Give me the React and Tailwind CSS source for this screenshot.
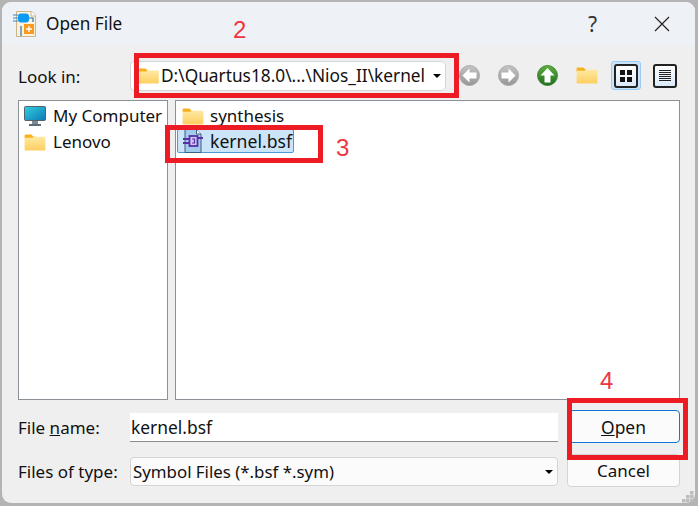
const FONT = "font-['Noto_Sans','Open_Sans',sans-serif]";

const Folder = ({ className }) => (
  <svg viewBox="0 0 22 18" className={className}>
    <defs>
      <linearGradient id="folderFill" x1="0" y1="0" x2="0" y2="1">
        <stop offset="0" stopColor="#ffe9a3" />
        <stop offset="1" stopColor="#fdcf60" />
      </linearGradient>
    </defs>
    <path d="M0 1.5 Q0 0.5 1 0.5 H7 L9.5 3 H11 V5 H0 Z" fill="#f6b01c" />
    <path d="M0 4 H8 L10 2.8 H21 Q22 2.8 22 3.8 V16.5 Q22 17.5 21 17.5 H1 Q0 17.5 0 16.5 Z" fill="url(#folderFill)" />
  </svg>
);

const AppIcon = () => (
  <svg viewBox="0 0 24 28" className="w-[24px] h-[28px]">
    <path d="M3.5 1.5 H19 L22.5 5 V26.5 H3.5 Z" fill="#fbf2dc" stroke="#c9b48c" strokeWidth="1" />
    <path d="M18 1 V6 H23" fill="#fff" stroke="#c9b48c" strokeWidth="1" />
    <path d="M0 5 H5 M0 8 H5 M0 11 H5" stroke="#3a86d8" strokeWidth="1.2" />
    <path d="M16 8 H20 V12 M8 16 V26" stroke="#2f6fb5" strokeWidth="1.2" fill="none" />
    <rect x="5" y="3.5" width="11" height="9" rx="3" fill="#0c9bf2" />
    <rect x="11" y="14" width="10" height="10" fill="#f79a1e" />
    <path d="M16 16 V22 M13 19 H19" stroke="#fff" strokeWidth="1.4" />
  </svg>
);

const Monitor = () => (
  <svg viewBox="0 0 22 20" className="w-[22px] h-[20px]">
    <defs>
      <linearGradient id="screenFill" x1="0" y1="0" x2="1" y2="1">
        <stop offset="0" stopColor="#30d0dc" />
        <stop offset="1" stopColor="#0f78b8" />
      </linearGradient>
    </defs>
    <rect x="0.5" y="0.5" width="21" height="14" rx="1" fill="url(#screenFill)" stroke="#56636e" />
    <rect x="8" y="15" width="6" height="3" fill="#7c8a94" />
    <rect x="5" y="18" width="12" height="2" fill="#5f6b74" />
  </svg>
);

const BsfIcon = () => (
  <svg viewBox="0 0 20 24" className="w-[20px] h-[24px]">
    <path d="M2 0.5 H13.5 L18 5 V23.5 H2 Z" fill="#a3cbed" stroke="#3f5f7e" strokeWidth="1" />
    <path d="M13.5 0.5 V5 H18" fill="#fff" stroke="#3f5f7e" strokeWidth="1" />
    <rect x="6.5" y="7" width="8" height="10" fill="#cfc8ee" stroke="#5a2ea6" strokeWidth="1.8" />
    <path d="M0 10 H6 M0 14 H6 M14.5 9 H20" stroke="#5a2ea6" strokeWidth="1.8" />
    <path d="M9 10 H11.5 V14 H9" fill="none" stroke="#5a2ea6" strokeWidth="1.2" />
  </svg>
);

const RoundArrow = ({ dir, from, to, ring }) => {
  const arrows = {
    left: "M10.5 3.5 L3.5 10.5 L10.5 17.5 V13.5 H17.5 V7.5 H10.5 Z",
    right: "M10.5 3.5 L17.5 10.5 L10.5 17.5 V13.5 H3.5 V7.5 H10.5 Z",
    up: "M10.5 3 L17.5 10.5 H13.5 V17.5 H7.5 V10.5 H3.5 Z",
  };
  const id = `arrow-${dir}`;
  return (
    <svg viewBox="0 0 21 21" className="w-[21px] h-[21px]">
      <defs>
        <linearGradient id={id} x1="0" y1="0" x2="0" y2="1">
          <stop offset="0" stopColor={from} />
          <stop offset="1" stopColor={to} />
        </linearGradient>
      </defs>
      <circle cx="10.5" cy="10.5" r="10" fill={`url(#${id})`} stroke={ring} strokeWidth="0.8" />
      <path d={arrows[dir]} fill="#fff" />
    </svg>
  );
};

const GridViewIcon = () => (
  <svg viewBox="0 0 12 12" className="w-[12px] h-[12px]" fill="#111">
    <rect x="0" y="0" width="5" height="5" />
    <rect x="7" y="0" width="5" height="5" />
    <rect x="0" y="7" width="5" height="5" />
    <rect x="7" y="7" width="5" height="5" />
  </svg>
);

const ListViewIcon = () => (
  <svg viewBox="0 0 12 12" className="w-[12px] h-[12px]" stroke="#222" strokeWidth="1">
    <path d="M0 0.5 H12 M0 2.5 H12 M0 4.5 H12 M0 6.5 H12 M0 8.5 H12 M0 10.5 H12" />
  </svg>
);

const Caret = () => (
  <span className="w-0 h-0 border-x-[4px] border-x-transparent border-t-[4px] border-t-black" />
);

const Callout = ({ className }) => (
  <div className={`absolute border-[5px] border-[#ed1c24] ${className}`} />
);

const CalloutNumber = ({ className, children }) => (
  <span className={`absolute text-[24px] leading-[28px] text-[#ee3540] font-['Liberation_Sans',sans-serif] ${className}`}>
    {children}
  </span>
);

const ToolCell = ({ children }) => (
  <div className="w-[39px] flex items-center justify-center">{children}</div>
);

export default function App() {
  return (
    <div className={`relative w-[698px] h-[506px] overflow-hidden bg-[#b4b4b4] pt-[2px] pl-[2px] pr-[3px] pb-[3px] text-[17px] leading-[24px] text-[#111] ${FONT}`}>
      <div className="relative h-full flex flex-col rounded-[9px] overflow-hidden bg-[#efefef]">
        {/* Title bar */}
        <div className="h-[43px] shrink-0 flex items-center bg-[#eef2f6] pl-[11px] pr-[25px]">
          <AppIcon />
          <span className="ml-[9px] text-[17.2px]">Open File</span>
          <span className="ml-auto text-[21px] text-[#333]">?</span>
          <svg viewBox="0 0 16 16" className="ml-[57px] w-[16px] h-[16px]" stroke="#222" strokeWidth="1.2">
            <path d="M1 1 L15 15 M15 1 L1 15" />
          </svg>
        </div>

        <div className="flex-1 flex flex-col pl-[16px] pr-[15px]">
          {/* Look in row */}
          <div className="mt-[16px] h-[30px] flex items-center">
            <span className="w-[112px] shrink-0 pt-[2px]">Look in:</span>
            <div className="w-[316px] h-[30px] shrink-0 flex items-center rounded-[5px] border border-[#d4d4d4] bg-white pl-[8px] pr-[4px]">
              <Folder className="w-[20px] h-[16px] shrink-0" />
              <span className="ml-[2px] text-[17.3px] whitespace-nowrap">D:\Quartus18.0\...\Nios_II\kernel</span>
              <span className="ml-auto flex"><Caret /></span>
            </div>
            <div className="ml-[4px] -mt-[1px] flex items-center">
              <ToolCell><RoundArrow dir="left" from="#c4c4c4" to="#979797" ring="#a2a2a2" /></ToolCell>
              <ToolCell><RoundArrow dir="right" from="#c4c4c4" to="#979797" ring="#a2a2a2" /></ToolCell>
              <ToolCell><RoundArrow dir="up" from="#5fae3c" to="#1f6f1c" ring="#2f7a2a" /></ToolCell>
              <ToolCell><Folder className="w-[22px] h-[17px]" /></ToolCell>
              <ToolCell>
                <div className="w-[30px] h-[29px] flex items-center justify-center rounded-[3px] bg-[#cce4fb] border border-[#99ccf6]">
                  <div className="w-[24px] h-[24px] flex items-center justify-center rounded-[3px] border-2 border-[#222] bg-gradient-to-b from-white to-[#dbeafa]">
                    <GridViewIcon />
                  </div>
                </div>
              </ToolCell>
              <ToolCell>
                <div className="w-[24px] h-[24px] flex items-center justify-center rounded-[3px] border-2 border-[#222] bg-gradient-to-b from-white to-[#dbeafa]">
                  <ListViewIcon />
                </div>
              </ToolCell>
            </div>
          </div>

          {/* Lists */}
          <div className="mt-[9px] h-[300px] flex gap-[7px]">
            <div className="w-[150px] shrink-0 border border-[#8c9097] bg-white pl-[5px] pt-[2px]">
              <div className="h-[26px] flex items-center">
                <Monitor />
                <span className="ml-[7px] whitespace-nowrap">My Computer</span>
              </div>
              <div className="h-[26px] flex items-center">
                <Folder className="w-[22px] h-[17px]" />
                <span className="ml-[7px]">Lenovo</span>
              </div>
            </div>
            <div className="w-[505px] shrink-0 border border-[#8c9097] bg-white pl-[1px] pt-[2px]">
              <div className="h-[26px] flex items-center pl-[5px]">
                <Folder className="w-[22px] h-[17px]" />
                <span className="ml-[6px]">synthesis</span>
              </div>
              <div className="w-[117px] h-[24px] flex items-center rounded-[2px] border border-[#4a9ad8] bg-[#cce4f7] pl-[5px]">
                <BsfIcon />
                <span className="ml-[7px] text-[17.6px] whitespace-nowrap">kernel.bsf</span>
              </div>
            </div>
          </div>

          {/* File name, type, buttons */}
          <div className="mt-[10px] flex">
            <div className="w-[540px] shrink-0 flex flex-col">
              <div className="mt-[3px] h-[29px] flex items-center">
                <span className="w-[112px] shrink-0">File <span className="underline">n</span>ame:</span>
                <div className="w-[428px] h-[29px] flex items-center bg-white border-b border-[#8c8c8c] pl-[1px] text-[17.4px]">kernel.bsf</div>
              </div>
              <div className="mt-[15px] h-[29px] flex items-center">
                <span className="w-[112px] shrink-0">Files of type:</span>
                <div className="w-[428px] h-[29px] flex items-center rounded-[4px] border border-[#d4d4d4] bg-[#fbfbfb] pl-[2px] pr-[4px]">
                  <span className="text-[16.85px]">Symbol Files (*.bsf *.sym)</span>
                  <span className="ml-auto flex"><Caret /></span>
                </div>
              </div>
            </div>
            <div className="ml-[11px] flex-1 flex flex-col">
              <div className="h-[33px] flex items-center justify-center rounded-[4px] border border-[#0f78d4] bg-[#fbfbfb]">
                <span className="text-[17.4px] -ml-[2px]"><span className="underline">O</span>pen</span>
              </div>
              <div className="mt-[11px] -ml-[2px] h-[33px] flex items-center justify-center rounded-[4px] border border-[#d4d4d4] bg-[#fbfbfb]">
                Cancel
              </div>
            </div>
          </div>
        </div>

        {/* Resize grip */}
        <svg viewBox="0 0 12 12" className="absolute right-[1px] bottom-[0px] w-[12px] h-[12px]" fill="#bdbdbd">
          <rect x="8" y="0" width="3.5" height="3.5" />
          <rect x="4" y="4" width="3.5" height="3.5" />
          <rect x="8" y="4" width="3.5" height="3.5" />
          <rect x="0" y="8" width="3.5" height="3.5" />
          <rect x="4" y="8" width="3.5" height="3.5" />
          <rect x="8" y="8" width="3.5" height="3.5" />
        </svg>
      </div>

      {/* Red annotations drawn over the screenshot */}
      <Callout className="left-[134px] top-[53px] w-[325px] h-[45px]" />
      <Callout className="left-[165px] top-[125px] w-[158px] h-[38px]" />
      <Callout className="left-[567px] top-[398px] w-[121px] h-[62px]" />
      <CalloutNumber className="left-[233px] top-[16px]">2</CalloutNumber>
      <CalloutNumber className="left-[336px] top-[134px]">3</CalloutNumber>
      <CalloutNumber className="left-[600px] top-[367px]">4</CalloutNumber>
    </div>
  );
}
